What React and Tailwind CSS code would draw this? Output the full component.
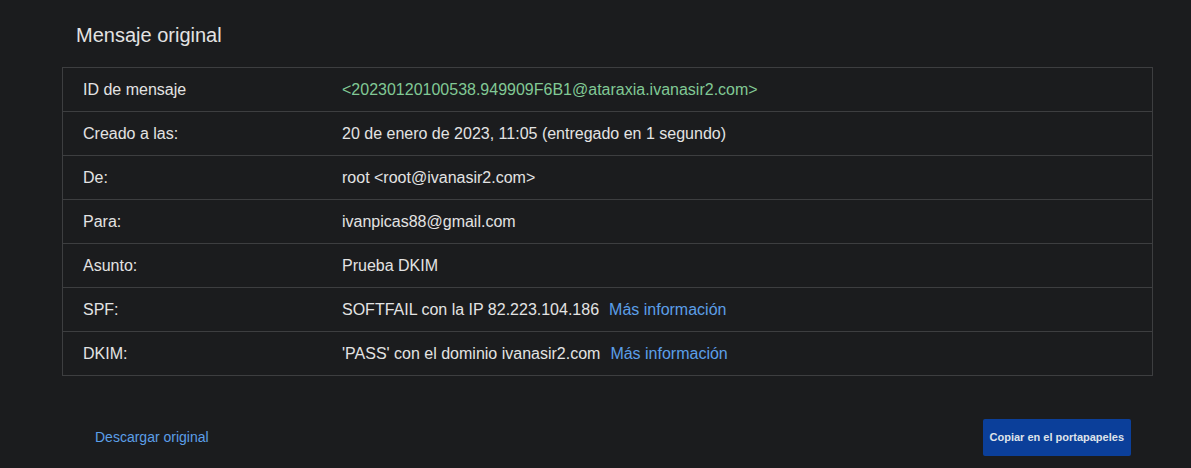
import React from 'react';

const rows = [
  { label: 'ID de mensaje', value: '<20230120100538.949909F6B1@ataraxia.ivanasir2.com>', green: true },
  { label: 'Creado a las:', value: '20 de enero de 2023, 11:05 (entregado en 1 segundo)' },
  { label: 'De:', value: 'root <root@ivanasir2.com>' },
  { label: 'Para:', value: 'ivanpicas88@gmail.com' },
  { label: 'Asunto:', value: 'Prueba DKIM' },
  { label: 'SPF:', value: 'SOFTFAIL con la IP 82.223.104.186', link: true },
  { label: 'DKIM:', value: "'PASS' con el dominio ivanasir2.com", link: true },
];

export default function App() {
  return (
    <div className="min-h-[468px] w-full bg-[#1b1c1e] font-['Liberation_Sans',Arial,sans-serif] text-[#e3e3e3]">
      <div className="px-[62px] pt-[21px] pr-[38px]">
        <h1 className="pl-[14px] text-[20px] leading-[28px] text-[#e3e3e3]">Mensaje original</h1>

        <div className="mt-[18px] border-x border-t border-[#3d3e40]">
          {rows.map((row) => (
            <div
              key={row.label}
              className="flex h-[44px] items-center border-b border-[#3d3e40] text-[16px]"
            >
              <div className="w-[279px] shrink-0 pl-[20px]">{row.label}</div>
              <div className={row.green ? 'text-[#81c995]' : 'text-[#e3e3e3]'}>
                {row.value}
                {row.link && (
                  <a href="#" className="ml-[10px] text-[#5b9fe8]">Más información</a>
                )}
              </div>
            </div>
          ))}
        </div>

        <div className="mt-[43px] flex items-center justify-between pl-[33px] pr-[22px]">
          <a href="#" className="text-[14px] text-[#5b9fe8]">Descargar original</a>
          <button className="h-[37px] rounded-[2px] bg-[#0b3f9a] px-[7px] text-[11px] font-bold text-[#dfe3ea]">
            Copiar en el portapapeles
          </button>
        </div>
      </div>
    </div>
  );
}
